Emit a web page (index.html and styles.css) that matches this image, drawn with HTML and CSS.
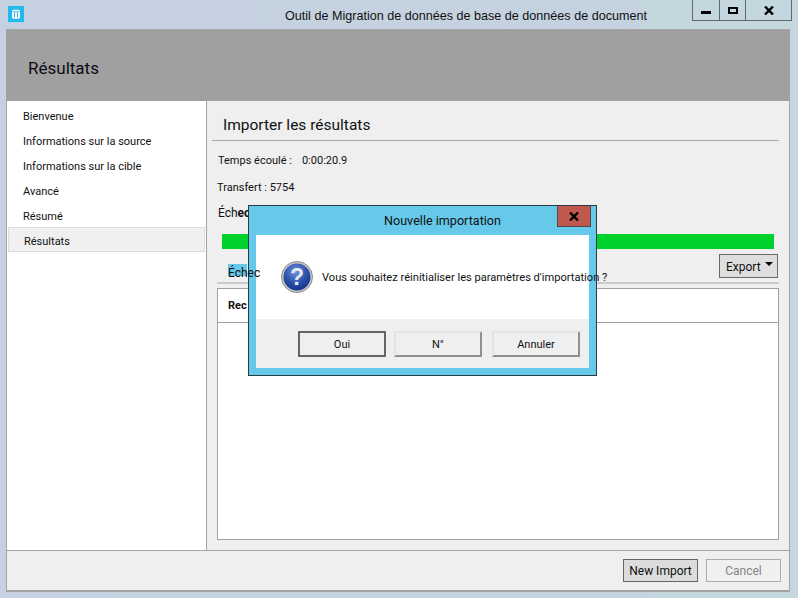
FILE: index.html
```html
<!DOCTYPE html>
<html lang="fr">
<head>
    <meta charset="UTF-8">
    <meta name="viewport" content="width=device-width, initial-scale=1.0">
    <title>Outil de Migration de données de base de données de document</title>
    <link rel="stylesheet" href="styles.css">
</head>
<body>
    <!-- Barre de titre -->
    <div class="titlebar">
        <div class="app-icon">
            <svg width="16" height="16" viewBox="0 0 16 16">
                <rect width="16" height="16" fill="#22b8f0"/>
                <path d="M4 4.5 Q8 2.5 12 4.5 V12 Q8 14 4 12 Z" fill="#fff"/>
                <path d="M4.5 5.5 Q8 7 11.500 5.500 M6.500 7 V11.500 M9.500 7 V11.500" stroke="#22b8f0" fill="none"/>
            </svg>
        </div>
        <div class="app-title">Outil de Migration de données de base de données de document</div>
        <div class="win-controls">
            <div class="win-btn win-min"><span class="glyph-min"></span></div>
            <div class="win-btn win-max"><span class="glyph-max"></span></div>
            <div class="win-btn win-close">
                <svg width="10" height="9" viewBox="0 0 10 9"><path d="M1 0.500 L9 8.500 M9 0.500 L1 8.500" stroke="#000" stroke-width="2.400"/></svg>
            </div>
        </div>
    </div>

    <div class="client">
        <div class="banner">Résultats</div>

        <div class="middle">
            <ul class="steps">
                <li>Bienvenue</li>
                <li>Informations sur la source</li>
                <li>Informations sur la cible</li>
                <li>Avancé</li>
                <li>Résumé</li>
                <li class="active">Résultats</li>
            </ul>

            <div class="content">
                <h2 class="content-title">Importer les résultats</h2>
                <div class="stat stat-time"><span>Temps écoulé :</span><span class="stat-value">0:00:20.9</span></div>
                <div class="stat stat-transfer">Transfert : 5754</div>
                <div class="stat stat-failed">Éch<b>ec</b></div>
                <div class="progress"></div>
                <div class="tabs-row">
                    <span class="tab"><span class="tab-mark"></span><span class="tab-label">Échec</span></span>
                    <div class="export-btn">Export<span class="caret"></span></div>
                </div>
                <div class="tabs-line"></div>
                <div class="grid-box">
                    <div class="grid-head">Rec</div>
                </div>
            </div>
        </div>

        <div class="footer">
            <button class="btn-new">New Import</button>
            <button class="btn-cancel">Cancel</button>
        </div>
    </div>

    <!-- Boite de dialogue -->
    <div class="dialog">
        <div class="dialog-head">
            <div class="dialog-title">Nouvelle importation</div>
            <div class="dialog-close">
                <svg width="10" height="9" viewBox="0 0 10 9"><path d="M1 0.500 L9 8.500 M9 0.500 L1 8.500" stroke="#000" stroke-width="2.400"/></svg>
            </div>
        </div>
        <div class="dialog-body">
            <svg class="question" width="32" height="32" viewBox="0 0 32 32">
                <defs>
                    <radialGradient id="bleu" cx="45%" cy="30%" r="75%">
                        <stop offset="0" stop-color="#6f92dc"/>
                        <stop offset="0.55" stop-color="#2c52ab"/>
                        <stop offset="1" stop-color="#142f85"/>
                    </radialGradient>
                </defs>
                <circle cx="16" cy="16" r="15.500" fill="#c9c9c9" stroke="#8a8a8a"/>
                <circle cx="16" cy="16" r="13.500" fill="url(#bleu)"/>
                <text x="16" y="24" class="question-mark" text-anchor="middle">?</text>
            </svg>
            <div class="dialog-msg">Vous souhaitez réinitialiser les paramètres d'importation ?</div>
        </div>
        <div class="dialog-actions">
            <button class="dlg-btn dlg-default">Oui</button>
            <button class="dlg-btn dlg-no">N°</button>
            <button class="dlg-btn">Annuler</button>
        </div>
    </div>
</body>
</html>
```

FILE: styles.css
```css
/* Estilo geral */
html, body {
    margin: 0;
    padding: 0;
}

body {
    position: relative;
    width: 798px;
    height: 598px;
    overflow: hidden;
    box-sizing: border-box;
    padding: 0 8px 6px 6px;
    background: linear-gradient(90deg, #c5d1e0 0%, #c5d2e0 78%, #c4d7de 82%, #c4d7de 100%);
    font-family: Roboto, "Liberation Sans", sans-serif;
    font-size: 11px;
    color: #111;
    display: flex;
    flex-direction: column;
}

/* Barre de titre */
.titlebar {
    height: 29px;
    flex: none;
    display: flex;
    align-items: flex-start;
}

.app-icon {
    margin: 6px 0 0 2px;
    width: 16px;
    height: 16px;
    flex: none;
}

.app-icon svg {
    display: block;
}

.app-title {
    margin: 9px 0 0 261px;
    width: 380px;
    flex: none;
    font-family: "Liberation Sans", sans-serif;
    font-size: 12.600px;
    line-height: 15px;
    white-space: nowrap;
}

.win-controls {
    margin-left: 27px;
    flex: none;
    display: flex;
    height: 21px;
    box-sizing: border-box;
    border: 1px solid #5f6a70;
    border-top: none;
}

.win-btn {
    display: flex;
    align-items: center;
    justify-content: center;
    border-right: 1px solid #5f6a70;
    box-sizing: border-box;
    height: 20px;
}

.win-min {
    width: 27px;
}

.win-max {
    width: 26px;
}

.win-close {
    width: 45px;
    border-right: none;
}

.glyph-min {
    width: 10px;
    height: 3px;
    margin-top: 5px;
    background: #000;
}

.glyph-max {
    width: 10px;
    height: 7px;
    box-sizing: border-box;
    margin-top: 0;
    border: 2px solid #000;
}

/* Fenetre */
.client {
    flex: 1;
    display: flex;
    flex-direction: column;
    border: 1px solid #a3a3a3;
    border-width: 1px 1px 2px 1px;
    background: #efefef;
    min-height: 0;
}

.banner {
    height: 71px;
    flex: none;
    box-sizing: border-box;
    padding: 27px 0 0 21px;
    background: #a0a0a0;
    font-size: 17px;
    line-height: 22px;
    color: #0c0c18;
}

.middle {
    flex: 1;
    display: flex;
    min-height: 0;
}

.steps {
    width: 200px;
    flex: none;
    box-sizing: border-box;
    margin: 0;
    padding: 1px 1px 0 1px;
    list-style: none;
    background: #fff;
    border-right: 1px solid #a3a3a3;
}

.steps li {
    height: 25px;
    line-height: 28px;
    padding-left: 14px;
    box-sizing: border-box;
    border: 1px solid transparent;
}

.steps .active {
    background: #f0f0f0;
    border-color: #dcdcdc;
    padding-left: 15px;
}

.content {
    flex: 1;
    padding: 0 10px 0 5px;
    min-width: 0;
    position: relative;
}

.content-title {
    margin: 0;
    height: 40px;
    box-sizing: border-box;
    padding: 14px 0 0 11px;
    font-size: 15.500px;
    line-height: 20px;
    font-weight: normal;
    border-bottom: 1px solid #a8a8a8;
}

.stat {
    padding-left: 6px;
    line-height: 16px;
}

.stat-time {
    display: flex;
    margin-top: 12px;
}

.stat-value {
    margin-left: 10px;
}

.stat-transfer {
    margin-top: 11px;
    padding-left: 5px;
}

.stat-failed {
    margin-top: 9px;
    font-size: 12px;
}

.progress {
    margin: 13px 5px 0 10px;
    height: 15px;
    background: #00d22d;
}

.tabs-row {
    height: 24px;
    margin-top: 5px;
    display: flex;
    justify-content: space-between;
    margin-right: 1px;
}

.tab {
    position: relative;
    z-index: 5;
    margin: 12px 0 0 16px;
    font-size: 12px;
    line-height: 14px;
    height: 14px;
}

.tab-mark {
    position: absolute;
    left: 0;
    top: -2px;
    width: 19px;
    height: 12px;
    background: #66c9ea;
}

.tab-label {
    position: relative;
}

.export-btn {
    width: 59px;
    height: 24px;
    box-sizing: border-box;
    border: 1px solid #6a6a6a;
    background: #dedede;
    padding-left: 6px;
    font-size: 12px;
    line-height: 24px;
    position: relative;
}

.caret {
    position: absolute;
    top: 7px;
    right: 4px;
    width: 0;
    height: 0;
    border-left: 4px solid transparent;
    border-right: 4px solid transparent;
    border-top: 4px solid #000;
}

.tabs-line {
    margin: 4px 0 0 5px;
    height: 2px;
    background: #cbcbcb;
}

.grid-box {
    margin: 4px 0 0 5px;
    height: 252px;
    box-sizing: border-box;
    background: #fff;
    border: 1px solid #a0a0a0;
}

.grid-head {
    height: 34px;
    box-sizing: border-box;
    border-bottom: 1px solid #a0a0a0;
    padding: 9px 0 0 10px;
    font-weight: bold;
    line-height: 16px;
}

.footer {
    height: 40px;
    flex: none;
    box-sizing: border-box;
    border-top: 1px solid #a3a3a3;
    display: flex;
    justify-content: flex-end;
    gap: 8px;
    padding: 8px 8px 0 0;
}

.footer button {
    width: 75px;
    height: 23px;
    padding: 0;
    font: inherit;
    font-size: 12px;
    border-radius: 0;
}

.btn-new {
    border: 1px solid #666;
    background: #dcdcdc;
    color: #111;
}

.btn-cancel {
    border: 1px solid #adadad;
    background: #f0f0f0;
    color: #858585;
}

/* Boite de dialogue */
.dialog {
    position: absolute;
    left: 248px;
    top: 205px;
    width: 349px;
    height: 171px;
    box-sizing: border-box;
    border: 1px solid #2b3a42;
    background: #66c9ea;
    padding: 0 7px 7px 7px;
    display: flex;
    flex-direction: column;
}

.dialog-head {
    height: 29px;
    flex: none;
    position: relative;
}

.dialog-title {
    text-align: center;
    font-size: 12.600px;
    line-height: 16px;
    padding: 7px 0 0 40px;
}

.dialog-close {
    position: absolute;
    top: 0;
    right: -2px;
    width: 34px;
    height: 21px;
    box-sizing: border-box;
    border: 1px solid #4b4b4b;
    border-top: none;
    background: #c0584e;
    display: flex;
    align-items: center;
    justify-content: center;
}

.dialog-body {
    height: 84px;
    flex: none;
    background: #fff;
    display: flex;
    align-items: flex-start;
    padding: 26px 0 0 25px;
    box-sizing: border-box;
}

.question {
    flex: none;
}

.question-mark {
    font-family: "Liberation Sans", sans-serif;
    font-size: 23px;
    font-weight: bold;
    fill: #e4e8f4;
}

.dialog-msg {
    margin: 9px 0 0 9px;
    font-size: 11.100px;
    line-height: 16px;
    white-space: nowrap;
    position: relative;
    z-index: 5;
}

.dialog-actions {
    flex: 1;
    background: #efefef;
    display: flex;
    padding: 12px 0 0 42px;
    align-items: flex-start;
}

.dlg-btn {
    width: 88px;
    height: 26px;
    padding: 1px 0 0 0;
    font: inherit;
    color: #111;
    background: #efefef;
    border: 1px solid #8f8f8f;
    border-top-color: #e4e4e4;
    border-left-color: #e4e4e4;
    border-radius: 0;
    border-width: 2px;
}

.dlg-default {
    border-color: #666;
}

.dlg-no {
    margin: 0 10px 0 8px;
}
```
